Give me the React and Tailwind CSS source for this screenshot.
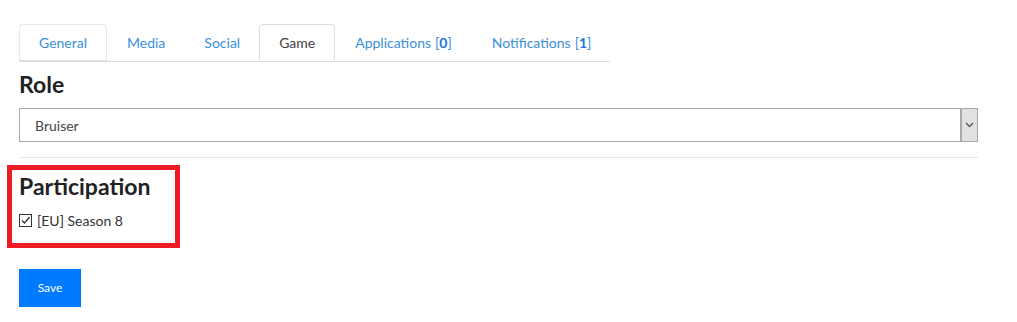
import React from 'react';

const tabs = [
  { label: 'General', bordered: true },
  { label: 'Media', pad: 'px-[20px]' },
  { label: 'Social', pad: 'px-[19px]' },
  { label: 'Game', active: true },
  { label: 'Applications', count: 0, pad: 'px-[20px]' },
  { label: 'Notifications', count: 1, pad: 'px-[20px]' },
];

const App = () => {
  return (
    <div className="relative w-[1017px] h-[322px] bg-white pl-[19px] pt-[24px]" style={{ fontFamily: 'Lato, "Open Sans", sans-serif' }}>
      {/* Tabs */}
      <div className="flex w-[591px] border-b border-[#dddddd]">
        {tabs.map((tab) => (
          <div
            key={tab.label}
            className={
              tab.active
                ? 'h-[37px] -mb-px px-[19px] flex items-center text-[14px] text-[#444] bg-white border border-[#dddddd] border-b-white rounded-t-[4px]'
                : tab.bordered
                ? 'h-[37px] -mb-px px-[19px] flex items-center text-[14px] text-[#3a8fd8] border border-[#e8e8e8] border-b-[#dddddd] rounded-t-[4px]'
                : `h-[37px] ${tab.pad} flex items-center text-[14px] text-[#3a8fd8]`
            }
          >
            {tab.label}
            {tab.count !== undefined && (
              <span className="ml-1">
                [<b className="text-[#1a73e0]">{tab.count}</b>]
              </span>
            )}
          </div>
        ))}
      </div>

      {/* Role */}
      <h2 className="mt-[8px] text-[23px] leading-[29px] font-bold text-[#222]">Role</h2>
      <div className="mt-[9px] w-[959px] h-[34px] flex border border-[#a9a9a9]">
        <div className="flex-1 flex items-center pl-[15px] text-[14px] text-[#444]">Bruiser</div>
        <div className="w-[17px] flex items-center justify-center bg-[#e1e1e1] border-l-2 border-[#a9a9a9]">
          <svg width="9" height="6" viewBox="0 0 9 6">
            <path d="M1 1 L4.5 4.5 L8 1" fill="none" stroke="#555" strokeWidth="1.3" />
          </svg>
        </div>
      </div>
      <div className="mt-[15px] w-[959px] border-t border-[#e6e6e6]" />

      {/* Participation */}
      <h2 className="mt-[14px] text-[23px] leading-[29px] font-bold text-[#222]">Participation</h2>
      <label className="mt-[9px] flex items-center gap-[5px] text-[14px] text-[#333]">
        <span className="w-[13px] h-[13px] border border-[#333] flex items-center justify-center bg-white">
          <svg width="11" height="11" viewBox="0 0 11 11">
            <path d="M2 5.5 L4.5 8 L9.5 2" fill="none" stroke="#333" strokeWidth="1.3" />
          </svg>
        </span>
        [EU] Season 8
      </label>

      <button className="mt-[38px] w-[62px] h-[38px] bg-[#007bff] text-white text-[12px]">Save</button>

      {/* Annotation box */}
      <div className="absolute left-[7px] top-[165px] w-[173px] h-[83px] border-[5px] border-[#ed1c24]" />
    </div>
  );
};

export default App;
